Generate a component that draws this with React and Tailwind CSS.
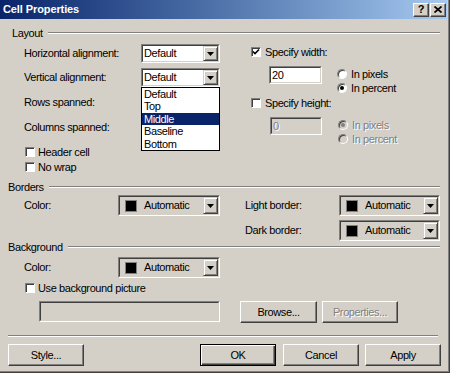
import React from "react";

const sunken =
  "border border-t-[#808080] border-l-[#808080] border-r-white border-b-white";
const sunkenInner =
  "border border-t-[#404040] border-l-[#404040] border-r-[#d4d0c8] border-b-[#d4d0c8]";
const raised =
  "bg-[#d4d0c8] border border-t-white border-l-white border-r-[#404040] border-b-[#404040] shadow-[inset_-1px_-1px_0_#808080]";
const disabledText = "text-[#808080] [text-shadow:1px_1px_0_#fff]";

const Arrow = () => (
  <svg width="7" height="4" viewBox="0 0 7 4">
    <polygon points="0,0 7,0 3.5,4" fill="black" />
  </svg>
);

const DropButton = () => (
  <div className="w-[15px] h-full shrink-0 flex items-center justify-center bg-[#d4d0c8] border border-t-[#d4d0c8] border-l-[#d4d0c8] border-r-[#404040] border-b-[#404040] shadow-[inset_1px_1px_0_#fff,inset_-1px_-1px_0_#808080]">
    <Arrow />
  </div>
);

const Combo = ({ value, className = "" }) => (
  <div className={`${sunken} ${className}`}>
    <div className={`${sunkenInner} h-full flex bg-white`}>
      <span className="flex-1 flex items-center pl-[1px]">{value}</span>
      <DropButton />
    </div>
  </div>
);

const ColorCombo = ({ className = "" }) => (
  <div className={`${sunken} ${className}`}>
    <div className={`${sunkenInner} h-full flex bg-[#d4d0c8]`}>
      <div className="flex-1 flex items-center pl-[5px]">
        <span className="w-[12px] h-[12px] bg-black border border-[#808080]" />
        <span className="ml-[7px]">Automatic</span>
      </div>
      <DropButton />
    </div>
  </div>
);

const Check = ({ checked }) => (
  <span className="relative shrink-0 w-[10px] h-[10px] bg-white border border-t-[#808080] border-l-[#808080] border-b-white border-r-white shadow-[inset_1px_1px_0_#404040]">
    {checked && (
      <svg className="absolute left-0 top-0" width="8" height="8" viewBox="0 0 8 8">
        <path d="M1 3.5 L3 5.6 L7 1.5" stroke="black" strokeWidth="1.6" fill="none" />
      </svg>
    )}
  </span>
);

const Radio = ({ on, disabled }) => (
  <span
    className={`relative shrink-0 w-[10px] h-[10px] rounded-full border border-t-[#808080] border-l-[#808080] border-b-white border-r-white shadow-[inset_1px_1px_0_#404040] ${
      disabled ? "bg-[#d4d0c8]" : "bg-white"
    }`}
  >
    {on && (
      <span
        className={`absolute left-[2px] top-[2px] w-[4px] h-[4px] rounded-full ${
          disabled ? "bg-[#808080]" : "bg-black"
        }`}
      />
    )}
  </span>
);

const RadioPair = ({ disabled, first }) => (
  <div className="flex flex-col mt-[1px]">
    <div className="h-[14px] flex items-center gap-[4px]">
      <Radio on={first} disabled={disabled} />
      <span className={disabled ? disabledText : ""}>In pixels</span>
    </div>
    <div className="h-[14px] flex items-center gap-[4px]">
      <Radio on={!first} disabled={disabled} />
      <span className={disabled ? disabledText : ""}>In percent</span>
    </div>
  </div>
);

const Header = ({ label, className = "" }) => (
  <div className={`h-[12px] flex items-center ${className}`}>
    <span>{label}</span>
    <div className="flex-1 ml-[5px] h-[2px] border-t border-t-[#808080] border-b border-b-white" />
  </div>
);

const Button = ({ children, className = "", disabled, isDefault }) => (
  <div
    className={`shrink-0 h-[22px] w-[76px] flex items-center justify-center ${
      isDefault
        ? "bg-[#d4d0c8] border border-black shadow-[inset_1px_1px_0_#fff,inset_-1px_-1px_0_#404040,inset_-2px_-2px_0_#808080]"
        : raised
    } ${disabled ? disabledText : ""} ${className}`}
  >
    {children}
  </div>
);

export default function App() {
  return (
    <div className="w-[450px] h-[373px] bg-[#d4d0c8] shadow-[inset_-1px_-1px_0_#404040,inset_-2px_-2px_0_#808080] font-['Liberation_Sans',Arial,sans-serif] text-[11px] tracking-[-0.4px] text-black flex flex-col overflow-hidden select-none">
      {/* title bar */}
      <div className="h-[19px] w-[447px] shrink-0 flex items-center bg-gradient-to-r from-[#0a246a] to-[#a6caf0] pl-[3px] pr-[1px]">
        <span className="font-bold text-white tracking-[-0.1px]">Cell Properties</span>
        <div className="ml-auto flex gap-[1px]">
          <div className={`${raised} w-[16px] h-[14px] flex items-center justify-center font-bold text-[11px] tracking-normal`}>
            ?
          </div>
          <div className={`${raised} w-[16px] h-[14px] flex items-center justify-center`}>
            <svg width="8" height="7" viewBox="0 0 8 7">
              <path d="M0.5 0.5 L7.5 6.5 M7.5 0.5 L0.5 6.5" stroke="black" strokeWidth="1.7" />
            </svg>
          </div>
        </div>
      </div>

      <div className="flex flex-col pt-[8px] pr-[10px]">
        {/* Layout */}
        <Header label="Layout" className="pl-[12px]" />
        <div className="flex pl-[24px]">
          <div className="w-[196px] shrink-0 flex flex-col">
            <div className="mt-[5px] h-[19px] flex items-center">
              <span className="w-[117px]">Horizontal alignment:</span>
              <Combo value="Default" className="w-[79px] h-[19px]" />
            </div>
            <div className="mt-[5px] h-[19px] flex items-center">
              <span className="w-[117px]">Vertical alignment:</span>
              <div className="relative">
                <Combo value="Default" className="w-[79px] h-[19px]" />
                <div className="absolute left-0 top-[19px] w-[79px] bg-white border border-black z-10 flex flex-col">
                  {["Default", "Top", "Middle", "Baseline", "Bottom"].map((o) => (
                    <div
                      key={o}
                      className={`h-[12.4px] flex items-center pl-[2px] ${
                        o === "Middle" ? "bg-[#0a246a] text-white" : ""
                      }`}
                    >
                      {o}
                    </div>
                  ))}
                </div>
              </div>
            </div>
            <div className="mt-[8px] h-[14px] flex items-center">Rows spanned:</div>
            <div className="mt-[11px] h-[14px] flex items-center">Columns spanned:</div>
            <div className="mt-[11px] h-[14px] flex items-center gap-[3px] pl-[1px]">
              <Check />
              <span>Header cell</span>
            </div>
            <div className="mt-[1px] h-[14px] flex items-center gap-[3px] pl-[1px]">
              <Check />
              <span>No wrap</span>
            </div>
          </div>

          <div className="ml-[31px] flex flex-col">
            <div className="mt-[6px] h-[14px] flex items-center gap-[4px]">
              <Check checked />
              <span>Specify width:</span>
            </div>
            <div className="mt-[7px] flex items-start">
              <div className={`${sunken} ml-[18px] w-[53px] h-[18px]`}>
                <div className={`${sunkenInner} h-full bg-white flex items-center pl-[1px]`}>20</div>
              </div>
              <div className="ml-[15px]">
                <RadioPair first={false} />
              </div>
            </div>
            <div className="mt-[1px] h-[14px] flex items-center gap-[4px]">
              <Check />
              <span>Specify height:</span>
            </div>
            <div className="mt-[7px] flex items-start">
              <div className={`${sunken} ml-[19px] w-[52px] h-[18px]`}>
                <div className={`${sunkenInner} h-full bg-[#d4d0c8] flex items-center pl-[1px] ${disabledText}`}>0</div>
              </div>
              <div className="ml-[16px]">
                <RadioPair first disabled />
              </div>
            </div>
          </div>
        </div>

        {/* Borders */}
        <Header label="Borders" className="mt-[7px] pl-[8px]" />
        <div className="mt-[2px] flex pl-[24px]">
          <div className="w-[196px] shrink-0 h-[21px] flex items-center">
            <span className="w-[94px]">Color:</span>
            <ColorCombo className="w-[102px] h-[21px]" />
          </div>
          <div className="ml-[25px] flex flex-col gap-[4px]">
            <div className="h-[21px] flex items-center">
              <span className="w-[94px]">Light border:</span>
              <ColorCombo className="w-[101px] h-[21px]" />
            </div>
            <div className="h-[21px] flex items-center">
              <span className="w-[94px]">Dark border:</span>
              <ColorCombo className="w-[101px] h-[21px]" />
            </div>
          </div>
        </div>

        {/* Background */}
        <Header label="Background" className="pl-[8px]" />
        <div className="mt-[4px] h-[21px] flex items-center pl-[24px]">
          <span className="w-[94px]">Color:</span>
          <ColorCombo className="w-[102px] h-[21px]" />
        </div>
        <div className="mt-[3px] h-[14px] flex items-center gap-[3px] pl-[25px]">
          <Check />
          <span>Use background picture</span>
        </div>
        <div className="mt-[6px] h-[21px] flex pl-[39px]">
          <div className={`${sunken} w-[181px] h-[21px] shrink-0`}>
            <div className={`${sunkenInner} h-full bg-[#d4d0c8]`} />
          </div>
          <Button className="ml-[20px] w-[77px] h-[21px]">Browse...</Button>
          <Button className="ml-[5px] h-[21px]" disabled>
            Properties...
          </Button>
        </div>

        {/* separator */}
        <div className="mt-[13px] ml-[8px] mr-[2px] h-[2px] border-t border-t-[#808080] border-b border-b-white" />

        <div className="mt-[7px] flex pl-[8px]">
          <Button>Style...</Button>
          <Button className="ml-[116px]" isDefault>
            OK
          </Button>
          <Button className="ml-[7px]">Cancel</Button>
          <Button className="ml-[6px]">Apply</Button>
        </div>
      </div>
    </div>
  );
}
